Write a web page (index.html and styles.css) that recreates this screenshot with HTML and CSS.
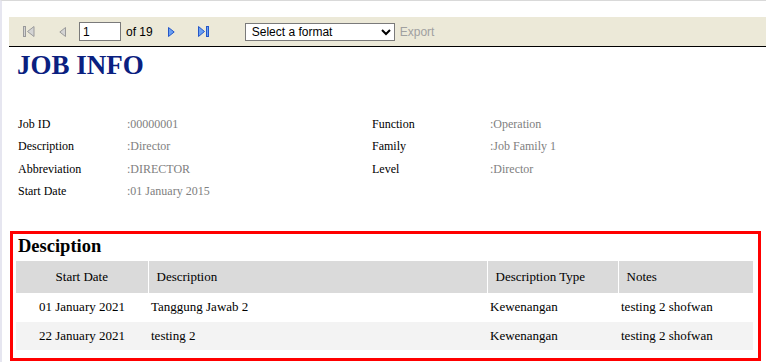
FILE: index.html
```html
<!doctype html>
<html>
<head>
<title>Job Info</title>
<meta charset="utf-8" />
<meta name="viewport" content="width=device-width, initial-scale=1" />
<link rel="stylesheet" href="styles.css">
</head>

<body>
<div class="frame">

<div class="toolbar">
<svg class="tb-first" width="12" height="11" viewBox="0 0 12 11">
<rect x="0.5" y="0.5" width="2" height="10" fill="#d4d4d4" stroke="#9a9a9a" />
<polygon points="11,0.5 4.5,5.5 11,10.5" fill="#d4d4d4" stroke="#9a9a9a" />
</svg>
<svg class="tb-prev" width="7" height="10" viewBox="0 0 7 10">
<polygon points="6.5,0.5 0.8,5 6.5,9.5" fill="#d4d4d4" stroke="#9a9a9a" />
</svg>
<input class="tb-page" type="text" value="1" />
<span class="tb-of">of 19</span>
<svg class="tb-next" width="7" height="10" viewBox="0 0 7 10">
<polygon points="0.5,0.5 6.2,5 0.5,9.5" fill="#6aa0f2" stroke="#2456c8" />
</svg>
<svg class="tb-last" width="12" height="11" viewBox="0 0 12 11">
<polygon points="0.5,0.5 6.5,5.5 0.5,10.5" fill="#6aa0f2" stroke="#2456c8" />
<rect x="8.5" y="0.5" width="2" height="10" fill="#6aa0f2" stroke="#2456c8" />
</svg>
<select class="tb-format">
<option>Select a format</option>
<option>PDF</option>
<option>Excel</option>
<option>Word</option>
</select>
<span class="tb-export">Export</span>
</div>

<div class="report">
<h1 class="title">JOB INFO</h1>

<div class="info">
<div class="label">Job ID</div><div class="value">:00000001</div>
<div class="label">Function</div><div class="value">:Operation</div>
<div class="label">Description</div><div class="value">:Director</div>
<div class="label">Family</div><div class="value">:Job Family 1</div>
<div class="label">Abbreviation</div><div class="value">:DIRECTOR</div>
<div class="label">Level</div><div class="value">:Director</div>
<div class="label">Start Date</div><div class="value">:01 January 2015</div>
<div></div><div></div>
</div>

<div class="desc-box">
<h2>Desciption</h2>
<table class="desc">
<colgroup>
<col class="c-date" />
<col class="c-desc" />
<col class="c-type" />
<col />
</colgroup>
<tr>
<th class="center">Start Date</th>
<th>Description</th>
<th>Description Type</th>
<th>Notes</th>
</tr>
<tr>
<td class="center">01 January 2021</td>
<td>Tanggung Jawab 2</td>
<td>Kewenangan</td>
<td>testing 2 shofwan</td>
</tr>
<tr class="alt">
<td class="center">22 January 2021</td>
<td>testing 2</td>
<td>Kewenangan</td>
<td>testing 2 shofwan</td>
</tr>
</table>
</div>
</div>

</div>
</body>
</html>
```

FILE: styles.css
```css
body {
margin: 0;
padding: 0;
background-color: #fff;
font-family: "Liberation Serif", "Times New Roman", serif;
color: #000;
}
.frame {
border-top: 1px solid #d9d9d9;
border-left: 2px solid #e6e6f0;
min-height: 362px;
box-sizing: border-box;
}

/* toolbar */
.toolbar {
margin: 16px 0 0 7px;
height: 29px;
background-color: #ece9d8;
border-bottom: 1px solid #000;
display: flex;
align-items: center;
font-family: "Liberation Sans", Arial, sans-serif;
font-size: 12px;
}
.tb-first {margin-left: 14px;}
.tb-prev {margin-left: 24px;}
.tb-page {
margin-left: 13px;
width: 42px;
height: 19px;
box-sizing: border-box;
border: 1px solid #7a7a7a;
padding: 0 3px;
font-family: "Liberation Sans", Arial, sans-serif;
font-size: 12px;
}
.tb-of {margin-left: 5px;}
.tb-next {margin-left: 15px;}
.tb-last {margin-left: 23px;}
.tb-format {
margin-left: 35px;
width: 150px;
height: 18px;
border: 1px solid #7a7a7a;
border-radius: 0;
background-color: #fff;
font-family: "Liberation Sans", Arial, sans-serif;
font-size: 12px;
padding: 0 2px;
}
.tb-export {
margin-left: 5px;
color: #a0a0a0;
}

/* report */
.report {
padding: 0 5px 0 8px;
}
.title {
margin: 3px 0 0 7px;
font-size: 27px;
line-height: 31px;
font-weight: bold;
color: #0a2080;
}
.info {
margin: 32px 0 0 8px;
display: grid;
grid-template-columns: 109px 245px 118px 1fr;
grid-auto-rows: 22.5px;
align-items: center;
font-size: 12px;
}
.value {color: #808080;}

.desc-box {
margin-top: 28px;
border: 3px solid #ff0000;
padding: 2px 5px 8px 3px;
}
.desc-box h2 {
margin: 0 0 4px 2px;
font-size: 18.5px;
line-height: 21px;
}
table.desc {
width: 100%;
border-collapse: collapse;
font-size: 13px;
}
.c-date {width: 132px;}
.c-desc {width: 339px;}
.c-type {width: 131px;}
.desc th {
height: 32px;
padding: 0 8px;
background-color: #dadada;
font-weight: normal;
text-align: left;
}
.desc th + th {border-left: 1px solid #fff;}
.desc td {
height: 28.5px;
padding: 0 3px;
}
.desc .center {text-align: center;}
.desc tr.alt td {background-color: #f3f3f3;}
```
